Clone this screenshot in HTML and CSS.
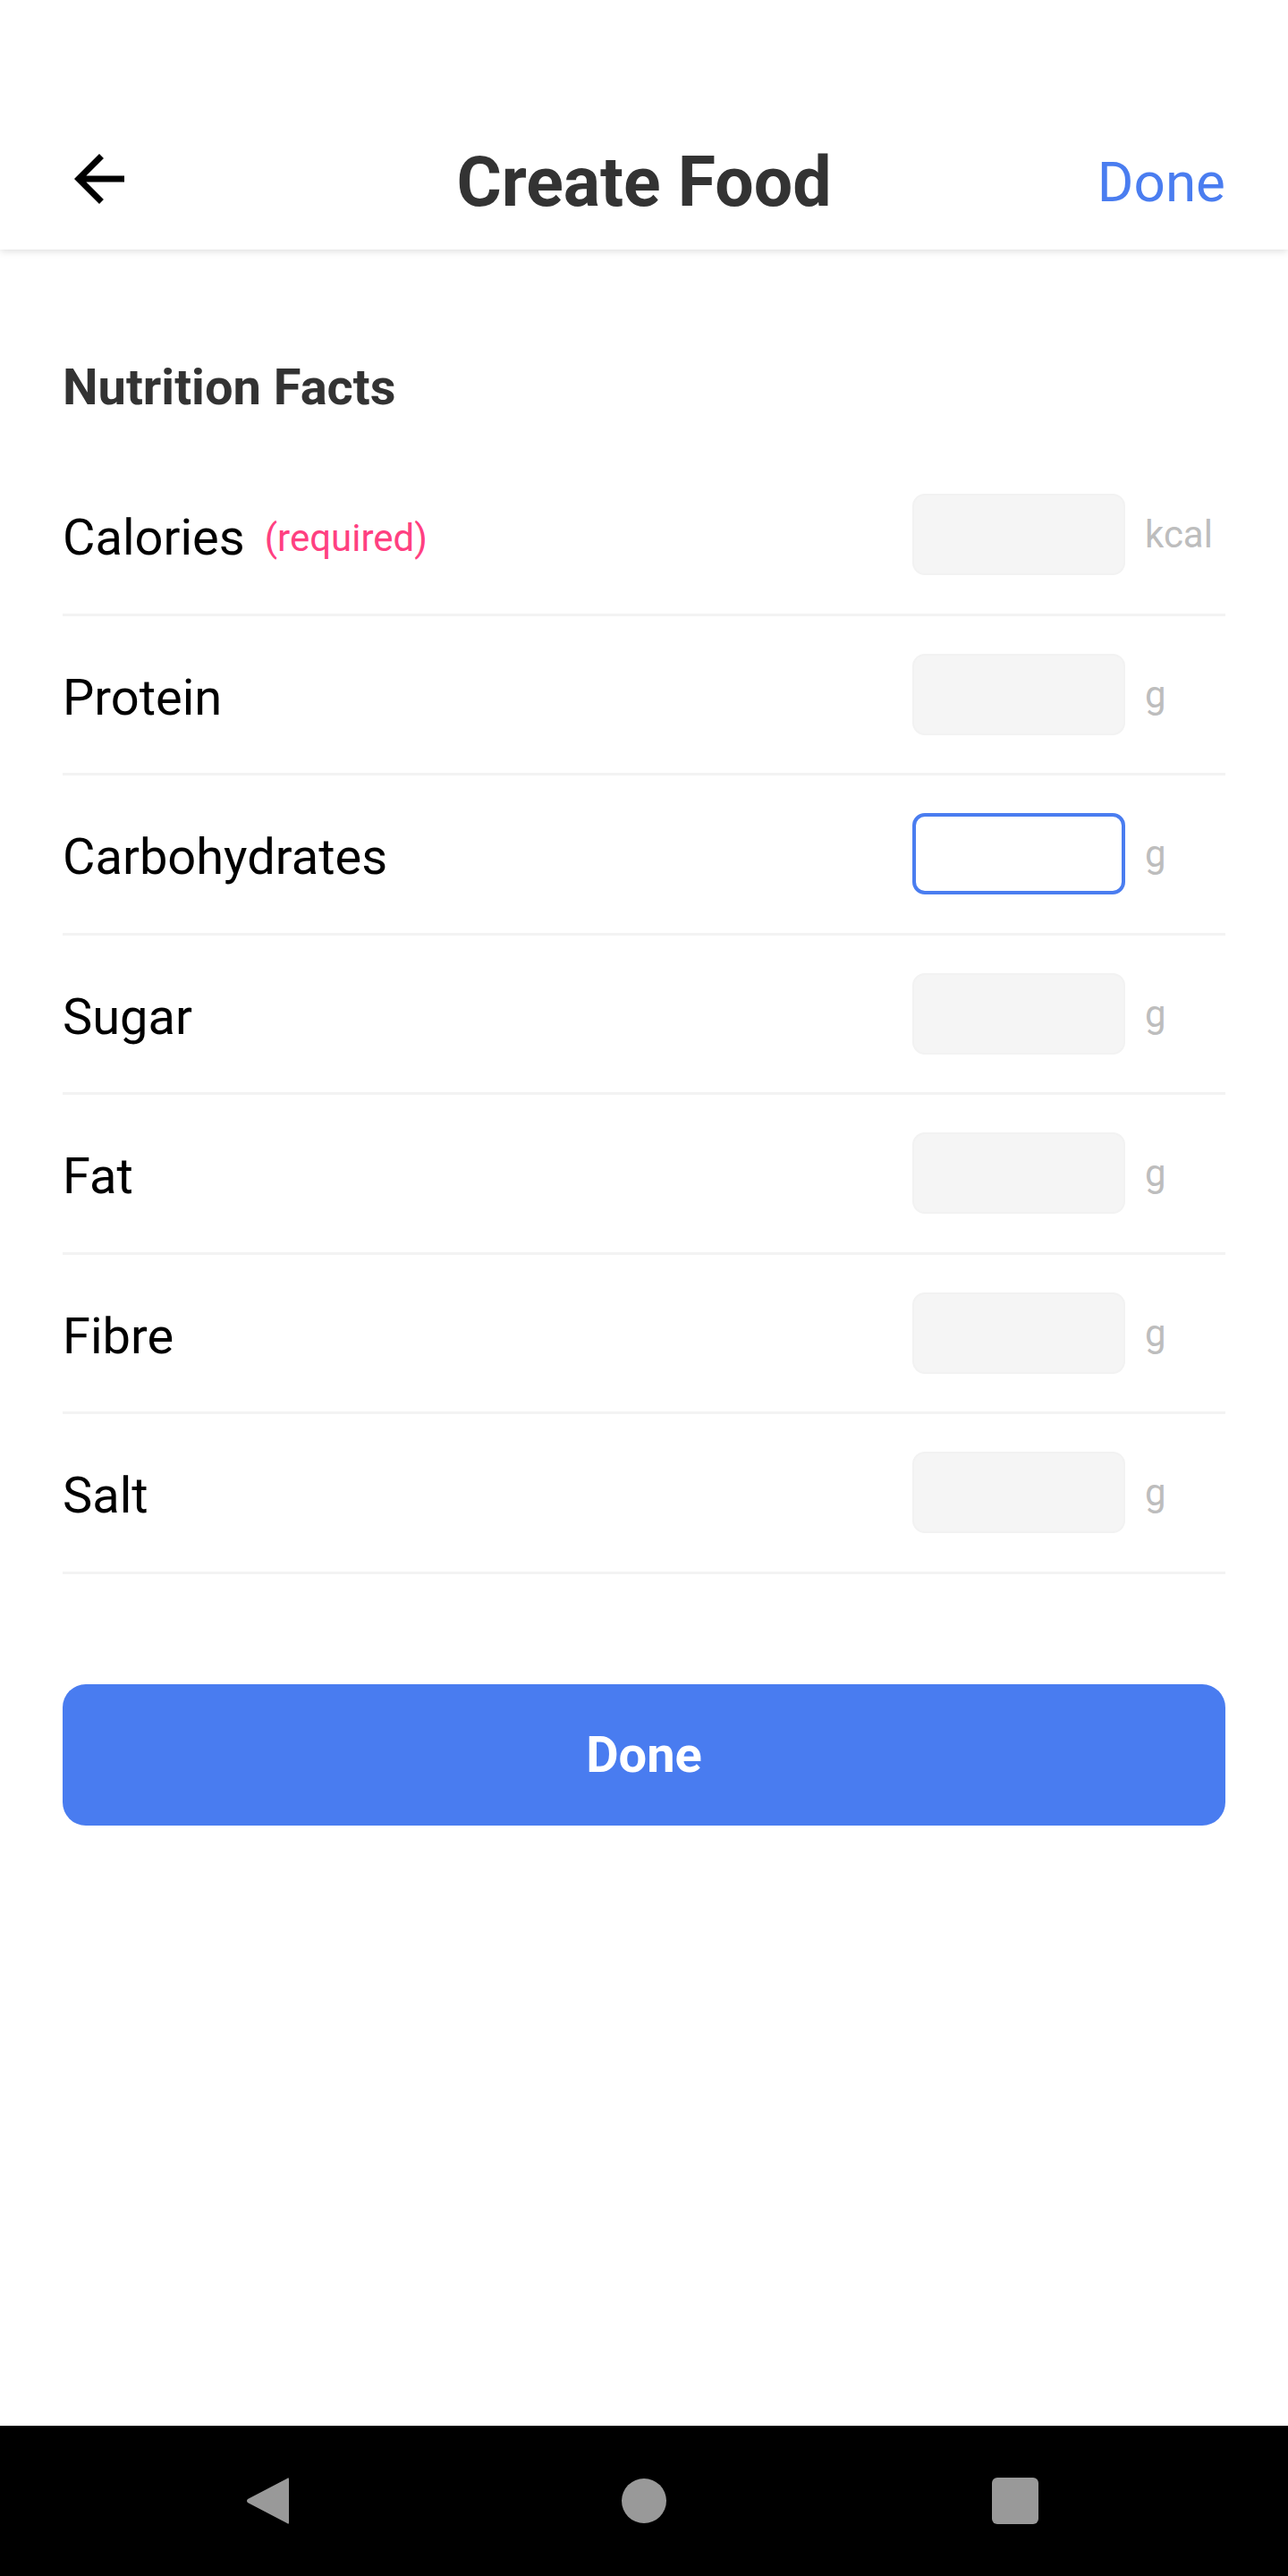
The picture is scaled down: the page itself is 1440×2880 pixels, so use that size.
FILE: index.html
```html
<!DOCTYPE html>
<html lang="en">
<head>
<meta charset="utf-8">
<title>Create Food</title>
<link rel="stylesheet" href="styles.css">
</head>
<body>
<div class="screen">
  <header class="appbar">
    <div class="appbar-left">
      <svg class="back-icon" viewBox="0 0 24 24" width="84" height="84" aria-hidden="true">
        <path d="M20 11H7.83l5.59-5.59L12 4l-8 8 8 8 1.41-1.41L7.83 13H20v-2z" fill="#000"/>
      </svg>
    </div>
    <h1 class="appbar-title">Create Food</h1>
    <div class="appbar-right"><span class="appbar-action">Done</span></div>
  </header>

  <main class="content">
    <h2 class="section-title">Nutrition Facts</h2>
    <div class="rows">
      <div class="row">
        <div class="label">Calories<span class="required">(required)</span></div>
        <div class="field"></div>
        <div class="unit">kcal</div>
      </div>
      <div class="row">
        <div class="label">Protein</div>
        <div class="field"></div>
        <div class="unit">g</div>
      </div>
      <div class="row">
        <div class="label">Carbohydrates</div>
        <div class="field field-focused"></div>
        <div class="unit">g</div>
      </div>
      <div class="row">
        <div class="label">Sugar</div>
        <div class="field"></div>
        <div class="unit">g</div>
      </div>
      <div class="row">
        <div class="label">Fat</div>
        <div class="field"></div>
        <div class="unit">g</div>
      </div>
      <div class="row">
        <div class="label">Fibre</div>
        <div class="field"></div>
        <div class="unit">g</div>
      </div>
      <div class="row">
        <div class="label">Salt</div>
        <div class="field"></div>
        <div class="unit">g</div>
      </div>
    </div>
    <button class="done-button" type="button">Done</button>
  </main>

  <nav class="navbar">
    <svg class="nav-back" viewBox="0 0 48 56" width="48" height="56" aria-hidden="true">
      <path d="M46 3 Q48 1 48 4 L48 52 Q48 55 46 53 L2 30 Q0 28 2 26 Z" fill="#999"/>
    </svg>
    <div class="nav-home"></div>
    <div class="nav-recent"></div>
  </nav>
</div>
</body>
</html>
```

FILE: styles.css
```css
* { box-sizing: border-box; }

html, body {
  margin: 0;
  padding: 0;
  background: #fff;
  font-family: Roboto, "Noto Sans", "Liberation Sans", sans-serif;
}

.screen {
  width: 1440px;
  min-height: 2880px;
  display: flex;
  flex-direction: column;
}

.appbar {
  height: 279px;
  padding: 129px 70px 0;
  display: grid;
  grid-template-columns: 1fr auto 1fr;
  align-items: center;
  background: #fff;
  box-shadow: 0 2px 8px rgba(0, 0, 0, 0.13);
  position: relative;
  z-index: 1;
}

.appbar-left {
  display: flex;
  align-items: center;
  height: 150px;
}

.back-icon {
  display: block;
  margin-left: -1px;
  margin-top: -8px;
}

.appbar-title {
  margin: 0;
  font-size: 77px;
  font-weight: 700;
  color: #333;
  line-height: 150px;
}

.appbar-right {
  display: flex;
  justify-content: flex-end;
  align-items: center;
  height: 150px;
}

.appbar-action {
  font-size: 62px;
  color: #4a7df0;
  line-height: 1;
}

.content {
  padding: 121px 70px 0;
  display: flex;
  flex-direction: column;
}

.section-title {
  margin: 0;
  font-size: 56px;
  font-weight: 700;
  color: #333;
  line-height: 66px;
  height: 66px;
  margin-bottom: 44px;
}

.rows {
  display: flex;
  flex-direction: column;
}

.row {
  height: 178.5px;
  border-bottom: 3px solid #f3f3f3;
  display: flex;
  align-items: center;
}

.label {
  flex: 1;
  font-size: 56px;
  line-height: 66px;
  color: #000;
  padding-top: 7px;
}

.required {
  font-size: 42px;
  color: #ff4081;
  margin-left: 22px;
  vertical-align: 4px;
}

.field {
  width: 238px;
  height: 91px;
  border-radius: 14px;
  background: #f5f5f5;
  border: 2px solid #f2f2f2;
}

.field-focused {
  background: #fff;
  border: 4px solid #4a7df0;
}

.unit {
  width: 112px;
  padding-left: 22px;
  font-size: 42px;
  color: #bdbdbd;
}

.done-button {
  margin-top: 123px;
  height: 158px;
  width: 100%;
  border: none;
  border-radius: 26px;
  background: #497cf0;
  color: #fff;
  font-family: Roboto, "Noto Sans", "Liberation Sans", sans-serif;
  font-size: 56px;
  font-weight: 700;
  padding: 0;
}

.navbar {
  margin-top: auto;
  height: 168px;
  background: #000;
  display: flex;
  align-items: center;
  padding-left: 275px;
}

.nav-back {
  display: block;
}

.nav-home {
  width: 50px;
  height: 50px;
  border-radius: 50%;
  background: #999;
  margin-left: 372px;
}

.nav-recent {
  width: 52px;
  height: 52px;
  border-radius: 6px;
  background: #999;
  margin-left: 364px;
}
```
